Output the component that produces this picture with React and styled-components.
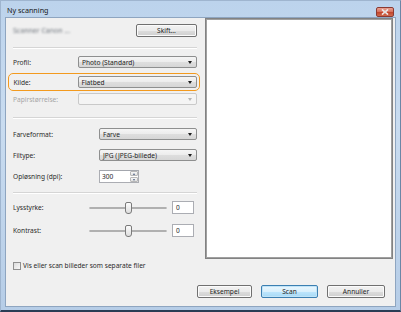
import React from 'react';
import styled, { createGlobalStyle } from 'styled-components';

const Global = createGlobalStyle`
  html, body {
    margin: 0;
    padding: 0;
    background: #ffffff;
  }
  body {
    font-family: "Noto Sans", "Open Sans", Arial, sans-serif;
    font-size: 6.6px;
    color: #2a2a2a;
  }
`;

const Window = styled.div`
  width: 401px;
  height: 312px;
  box-sizing: border-box;
  display: flex;
  flex-direction: column;
  background: linear-gradient(to bottom, #bcd3ec 0%, #c9dcf0 40%, #b6cde7 100%);
  border: 1px solid #6b86a6;
  border-bottom: 2px solid #2a3d55;
  border-top-color: #9fb5cf;
  border-left-color: #9fb5cf;
  padding: 0 4px 3px 4px;
`;

const TitleBar = styled.div`
  height: 16px;
  display: flex;
  align-items: center;
  justify-content: space-between;
  padding-left: 2px;
`;

const Title = styled.span`
  font-size: 7.2px;
  color: #1a1a1a;
  margin-top: 1px;
`;

const CloseButton = styled.div`
  width: 18px;
  height: 10px;
  margin-top: 5px;
  margin-right: 2px;
  border-radius: 2px;
  border: 1px solid #8a3a33;
  background: linear-gradient(to bottom, #e8a293 0%, #d7735f 45%, #c2452c 55%, #cf6b4f 100%);
  display: flex;
  align-items: center;
  justify-content: center;
  box-sizing: border-box;
`;

const Client = styled.div`
  flex: 1;
  display: flex;
  flex-direction: column;
  background: #f0f0f0;
  border: 1px solid #8ea5c0;
`;

const Main = styled.div`
  display: flex;
  flex: 1;
`;

const Settings = styled.div`
  width: 195px;
  box-sizing: border-box;
  padding: 6px 4px 0 3px;
  display: flex;
  flex-direction: column;
`;

const Row = styled.div`
  display: flex;
  align-items: center;
  height: ${p => p.h || 12}px;
  margin-top: ${p => p.mt || 0}px;
  padding-left: ${p => (p.pl === undefined ? 4 : p.pl)}px;
`;

const Highlight = styled.div`
  margin-top: ${p => p.mt || 0}px;
  border: 1.5px solid #f39a1e;
  border-radius: 5px;
  padding: 2px 2px 2px 2.5px;
  margin-left: -1px;
  margin-right: -3px;
`;

const Label = styled.span`
  width: ${p => p.w || 65}px;
  flex-shrink: 0;
  color: ${p => (p.disabled ? '#a6a6a6' : '#2a2a2a')};
`;

const Blur = styled.span`
  flex: 1;
  font-size: 7px;
  color: #6f757d;
  filter: blur(0.8px);
`;

const Separator = styled.div`
  margin: ${p => p.mt || 0}px 0 0 4px;
  height: 1px;
  background: #d5d5d5;
  border-bottom: 1px solid #ffffff;
`;

const Button = styled.div`
  width: ${p => p.w || 56}px;
  height: 13px;
  box-sizing: border-box;
  border: 1px solid ${p => (p.primary ? '#3c7fb1' : '#707070')};
  border-radius: 2px;
  background: ${p =>
    p.primary
      ? 'linear-gradient(to bottom, #eaf6fd 0%, #d9f0fc 50%, #bee6fd 51%, #a7d9f5 100%)'
      : 'linear-gradient(to bottom, #f2f2f2 0%, #ebebeb 50%, #dddddd 51%, #cfcfcf 100%)'};
  box-shadow: inset 0 0 0 1px ${p => (p.primary ? '#c0e4f8' : '#fbfbfb')};
  display: flex;
  align-items: center;
  justify-content: center;
  color: #1e1e1e;
`;

const Combo = styled.div`
  flex: 1;
  height: 12px;
  box-sizing: border-box;
  border: 1px solid ${p => (p.disabled ? '#c9c9c9' : '#8e8f8f')};
  border-radius: 2px;
  background: ${p =>
    p.disabled
      ? '#f4f4f4'
      : 'linear-gradient(to bottom, #f5f5f5 0%, #ececec 50%, #dedede 51%, #d6d6d6 100%)'};
  display: flex;
  align-items: center;
  padding: 0 4px 0 3px;
`;

const ComboText = styled.span`
  flex: 1;
  color: #1e1e1e;
`;

const Arrow = styled.span`
  width: 0;
  height: 0;
  border-left: 2.5px solid transparent;
  border-right: 2.5px solid transparent;
  border-top: 3px solid ${p => (p.disabled ? '#b5b5b5' : '#1e1e1e')};
`;

const Spinner = styled.div`
  width: 40px;
  height: 13px;
  box-sizing: border-box;
  border: 1px solid #abadb3;
  border-top-color: #a3a6ad;
  background: #ffffff;
  display: flex;
  align-items: center;
  padding-left: 2px;
`;

const SpinText = styled.span`
  flex: 1;
`;

const SpinButtons = styled.div`
  width: 8px;
  height: 11px;
  display: flex;
  flex-direction: column;
  gap: 1px;
`;

const SpinBtn = styled.div`
  flex: 1;
  border: 1px solid #b8b8b8;
  border-radius: 1px;
  background: linear-gradient(to bottom, #f7f7f7, #e1e1e1);
  display: flex;
  align-items: center;
  justify-content: center;
`;

const TinyArrow = styled.span`
  width: 0;
  height: 0;
  border-left: 1.5px solid transparent;
  border-right: 1.5px solid transparent;
  ${p =>
    p.up
      ? 'border-bottom: 2px solid #4d6185;'
      : 'border-top: 2px solid #4d6185;'}
`;

const Slider = styled.div`
  width: 78px;
  margin-left: 10px;
  height: 12px;
  position: relative;
  display: flex;
  align-items: center;
`;

const Track = styled.div`
  width: 100%;
  height: 2px;
  background: #e7eaea;
  border: 1px solid #b0b0b0;
  border-radius: 1px;
  box-sizing: border-box;
`;

const Thumb = styled.div`
  position: absolute;
  left: 36px;
  top: 0;
  width: 5px;
  height: 10px;
  border: 1px solid #7a7a7a;
  border-radius: 2px 2px 3px 3px;
  background: linear-gradient(to bottom, #fcfcfc, #dedede);
`;

const NumBox = styled.div`
  width: 22px;
  height: 13px;
  box-sizing: border-box;
  margin-left: 5px;
  border: 1px solid #abadb3;
  background: #fff;
  display: flex;
  align-items: center;
  padding-left: 3px;
`;

const CheckRow = styled.div`
  display: flex;
  align-items: center;
  margin-top: ${p => p.mt || 0}px;
  padding-left: 4px;
  gap: 2px;
`;

const Check = styled.div`
  width: 8px;
  height: 8px;
  box-sizing: border-box;
  border: 1px solid #8f8f8f;
  background: linear-gradient(135deg, #dcdcdc, #f8f8f8);
`;

const Preview = styled.div`
  flex: 1;
  margin: 0 2px 26px 4px;
  background: #ffffff;
  border: 1px solid #828282;
  box-shadow: inset 0 0 0 1px #a0a0a0;
`;

const Footer = styled.div`
  display: flex;
  justify-content: flex-end;
  gap: 9px;
  padding: 0 10px 8px 0;
`;

export default function App() {
  return (
    <>
      <Global />
      <Window>
        <TitleBar>
          <Title>Ny scanning</Title>
          <CloseButton>
            <svg width="8" height="6" viewBox="0 0 8 6">
              <path d="M1 0.5 L7 5.5 M7 0.5 L1 5.5" stroke="#ffffff" strokeWidth="1.6" />
              <path d="M1 0.5 L7 5.5 M7 0.5 L1 5.5" stroke="#8a8a8a" strokeWidth="0.5" opacity="0.5" />
            </svg>
          </CloseButton>
        </TitleBar>
        <Client>
          <Main>
            <Settings>
              <Row h={13}>
                <Blur>Scanner Canon ...</Blur>
                <Button w={61}>Skift...</Button>
              </Row>
              <Separator mt={10} />
              <Row mt={7}>
                <Label>Profil:</Label>
                <Combo>
                  <ComboText>Photo (Standard)</ComboText>
                  <Arrow />
                </Combo>
              </Row>
              <Highlight mt={5}>
                <Row pl={2}>
                  <Label w={64}>Kilde:</Label>
                  <Combo>
                    <ComboText>Flatbed</ComboText>
                    <Arrow />
                  </Combo>
                </Row>
              </Highlight>
              <Row mt={2}>
                <Label disabled>Papirstørrelse:</Label>
                <Combo disabled>
                  <ComboText />
                  <Arrow disabled />
                </Combo>
              </Row>
              <Separator mt={12} />
              <Row mt={9}>
                <Label w={86}>Farveformat:</Label>
                <Combo>
                  <ComboText>Farve</ComboText>
                  <Arrow />
                </Combo>
              </Row>
              <Row mt={9}>
                <Label w={86}>Filtype:</Label>
                <Combo>
                  <ComboText>JPG (JPEG-billede)</ComboText>
                  <Arrow />
                </Combo>
              </Row>
              <Row mt={9} h={13}>
                <Label w={86}>Opløsning (dpi):</Label>
                <Spinner>
                  <SpinText>300</SpinText>
                  <SpinButtons>
                    <SpinBtn><TinyArrow up /></SpinBtn>
                    <SpinBtn><TinyArrow /></SpinBtn>
                  </SpinButtons>
                </Spinner>
              </Row>
              <Separator mt={9} />
              <Row mt={7} h={13}>
                <Label w={66}>Lysstyrke:</Label>
                <Slider>
                  <Track />
                  <Thumb />
                </Slider>
                <NumBox>0</NumBox>
              </Row>
              <Row mt={10} h={13}>
                <Label w={66}>Kontrast:</Label>
                <Slider>
                  <Track />
                  <Thumb />
                </Slider>
                <NumBox>0</NumBox>
              </Row>
              <CheckRow mt={24}>
                <Check />
                <span>Vis eller scan billeder som separate filer</span>
              </CheckRow>
            </Settings>
            <Preview />
          </Main>
          <Footer>
            <Button w={55}>Eksempel</Button>
            <Button w={57} primary>Scan</Button>
            <Button w={58}>Annuller</Button>
          </Footer>
        </Client>
      </Window>
    </>
  );
}
